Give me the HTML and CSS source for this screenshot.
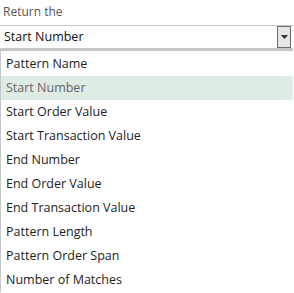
FILE: index.html
```html
<!DOCTYPE html>
<html lang="en">
<head>
    <meta charset="UTF-8">
    <title>Return the</title>
    <link rel="stylesheet" href="styles.css">
</head>
<body>

<div class="field">
    <div class="field-label">Return the</div>

    <div class="combo">
        <span class="combo-value">Start Number</span>
        <span class="combo-button">
            <svg width="7" height="4" viewBox="0 0 7 4"><path d="M0 0H7L3.5 4Z" fill="#333"/></svg>
        </span>
    </div>

    <!-- open dropdown list -->
    <ul class="options">
        <li>Pattern Name</li>
        <li class="selected">Start Number</li>
        <li>Start Order Value</li>
        <li>Start Transaction Value</li>
        <li>End Number</li>
        <li>End Order Value</li>
        <li>End Transaction Value</li>
        <li>Pattern Length</li>
        <li>Pattern Order Span</li>
        <li>Number of Matches</li>
    </ul>
</div>

</body>
</html>
```

FILE: styles.css
```css
body {
    font-family: 'Open Sans', 'Noto Sans', sans-serif;
    font-size: 12.5px;
    color: #222;
    background-color: #fff;
    margin: 0;
    padding: 0;
}

.field {
    width: 293px;
}

.field-label {
    color: #555;
    font-size: 12px;
    height: 25px;
    line-height: 24px;
    padding-left: 3px;
}

.combo {
    display: flex;
    align-items: stretch;
    height: 22px;
    border-top: 1px solid #c6c6c6;
    border-bottom: 2px solid #c6c6c6;
}

.combo-value {
    flex: 1;
    line-height: 22px;
    padding-left: 4px;
    color: #111;
}

.combo-button {
    width: 12px;
    margin-right: 2px;
    display: flex;
    align-items: center;
    justify-content: center;
    background-color: #e6e6e6;
    border: 1px solid #6d6d6d;
}

.options {
    list-style: none;
    margin: 0;
    padding: 1px 0 0 0;
    border-left: 1px solid #c6c6c6;
    border-top: 1px solid #c6c6c6;
}

.options li {
    height: 24px;
    line-height: 24px;
    padding-left: 5px;
}

.options li.selected {
    background-color: #dfece3;
    color: #666;
}
```
